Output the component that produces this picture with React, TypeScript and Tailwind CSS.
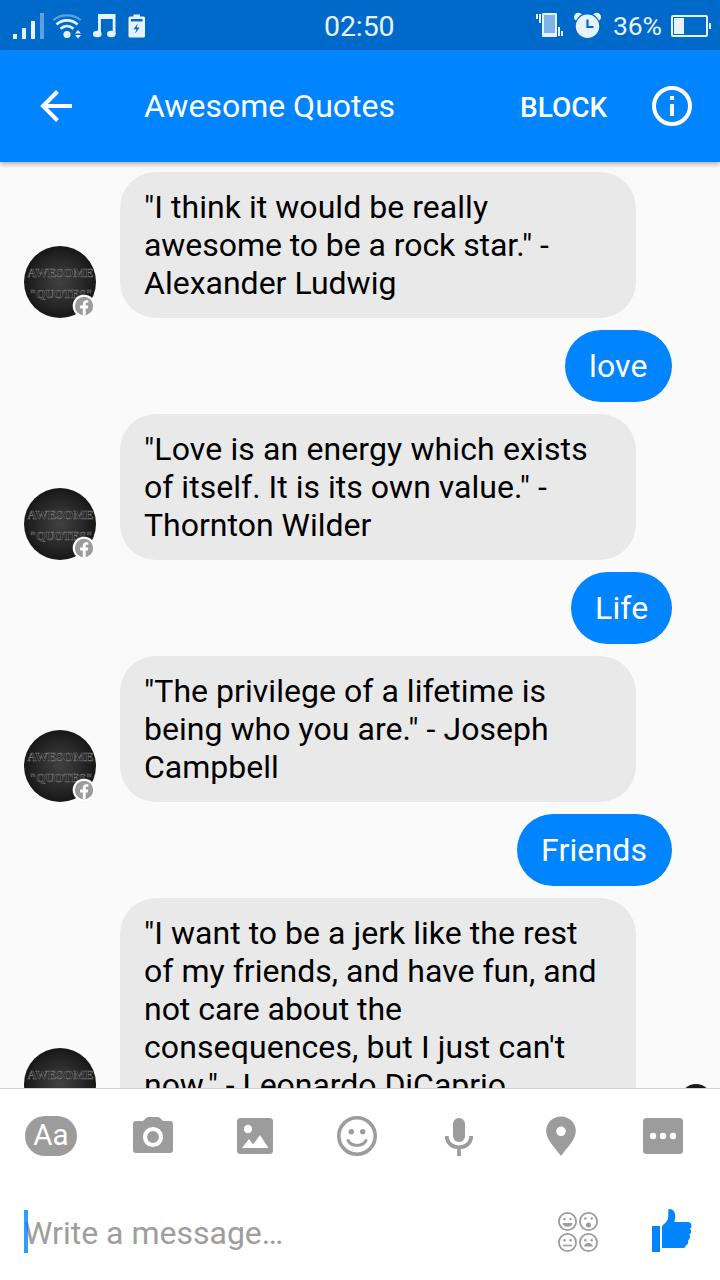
import React from "react";

type Message = { from: "bot" | "me"; lines: string[]; size?: string; tracking?: string[] };

const messages: Message[] = [
  {
    from: "bot",
    lines: ['"I think it would be really', 'awesome to be a rock star." -', "Alexander Ludwig"],
    tracking: ["tracking-[0.04px]", "tracking-[-0.06px]"],
  },
  { from: "me", lines: ["love"], size: "w-[107px]" },
  {
    from: "bot",
    lines: ['"Love is an energy which exists', 'of itself. It is its own value." -', "Thornton Wilder"],
    tracking: ["tracking-[0.12px]", "tracking-[0.02px]"],
  },
  { from: "me", lines: ["Life"], size: "w-[101px]" },
  {
    from: "bot",
    lines: ['"The privilege of a lifetime is', 'being who you are." - Joseph', "Campbell"],
    tracking: ["tracking-[0.04px]", "tracking-[0.04px]"],
  },
  { from: "me", lines: ["Friends"], size: "w-[155px]" },
  {
    from: "bot",
    lines: [
      '"I want to be a jerk like the rest',
      "of my friends, and have fun, and",
      "not care about the",
      "consequences, but I just can't",
      'now." - Leonardo DiCaprio',
    ],
    tracking: ["tracking-[0.03px]", "tracking-[0.03px]", "tracking-[-0.04px]", "tracking-[0.1px]", "tracking-[-0.04px]"],
  },
];

function StatusBar() {
  return (
    <div className="grid h-[50px] shrink-0 grid-cols-[1fr_auto_1fr] items-center bg-[#006acb] text-[#e6f3ff]">
      <svg className="h-[50px] w-[160px]" viewBox="0 0 160 50" fill="#e6f3ff">
        <rect x="13" y="33" width="4" height="5" />
        <rect x="22" y="27" width="4" height="11" />
        <rect x="31" y="20" width="4" height="18" />
        <rect x="40" y="12" width="4" height="26" opacity=".4" />
        <g fill="none" stroke="#e6f3ff" strokeWidth="2.7">
          <path d="M53.3 19.3C60.5 12.700 73.500 12.700 80.700 19.300" opacity=".4" strokeWidth="2.2" />
          <path d="M56.500 23.400C62.500 17.900 71.500 17.900 77.500 23.400" />
          <path d="M60.500 27.800C64.500 24.200 69.500 24.200 73.500 27.800" />
        </g>
        <circle cx="67" cy="33.500" r="3.600" />
        <path d="M78 29l3 3.500h-6zM78 37.500l3-3.500h-6z" />
        <path d="M98 13h17.500v20h-2.800V18h-11.800v15H98z" />
        <ellipse cx="97.300" cy="33" rx="4.300" ry="3.300" />
        <ellipse cx="111.300" cy="33" rx="4.300" ry="3.300" />
        <path fillRule="evenodd" d="M133.500 13.500h6.500v2h3.500q1.500 0 1.500 1.500v18q0 1.500-1.500 1.500h-13.500q-1.500 0-1.500-1.500V17q0-1.500 1.500-1.500h3.500zM131 18v2.600h11.500V18zM137.800 22.500l-4.300 5.700h3l-1.500 4.500 4.700-6.200h-3z" />
      </svg>
      <span className="w-[72px] pt-[2px] text-[28.500px] leading-[50px] tracking-[-0.1px]">02:50</span>
      <div className="flex items-center justify-end">
        <svg className="h-[50px] w-[76px]" viewBox="530 0 76 50" fill="#e6f3ff">
          <rect x="542" y="12" width="15" height="24" rx="1" />
          <rect x="544" y="14" width="11" height="18" fill="#7fb4e6" />
          <rect x="536" y="13" width="2" height="5" />
          <rect x="539" y="13" width="2" height="9" />
          <rect x="558" y="26" width="2" height="9" />
          <rect x="561" y="30" width="2" height="5" />
          <circle cx="578.300" cy="16" r="4.300" />
          <circle cx="596.700" cy="16" r="4.300" />
          <circle cx="587.500" cy="25" r="12.700" fill="#006acb" />
          <circle cx="587.500" cy="25.300" r="11.700" />
          <path d="M587.500 18.500v7.500h6" fill="none" stroke="#006acb" strokeWidth="2.200" />
        </svg>
        <span className="ml-[7px] w-[50px] text-[26.500px] leading-[48px] tracking-[-0.2px]">36%</span>
        <svg className="ml-[7px] h-[50px] w-[50px]" viewBox="670 0 50 50" fill="#e6f3ff">
          <rect x="672" y="15" width="35" height="20" rx="1" fill="none" stroke="#e6f3ff" strokeWidth="2" />
          <rect x="674" y="17" width="10" height="16" />
          <rect x="709" y="22" width="2" height="6" />
        </svg>
      </div>
    </div>
  );
}

function Header() {
  return (
    <header className="z-10 flex h-[112px] shrink-0 items-center bg-[#0084ff] text-white shadow-[0_2px_5px_rgba(0,0,0,0.32)]">
      <svg className="ml-[38px] h-[36px] w-[36px]" viewBox="38 88 36 36" fill="none" stroke="#fff" strokeWidth="4">
        <path d="M72 106H43M57.500 91.500L43 106l14.500 14.500" />
      </svg>
      <h1 className="ml-[70px] w-[376px] text-[32px] leading-[40px]">Awesome Quotes</h1>
      <span className="w-[132px] pt-[3px] text-[28px] font-medium leading-[40px]">BLOCK</span>
      <svg className="h-[40px] w-[40px]" viewBox="0 0 40 40">
        <circle cx="20" cy="20" r="18" fill="none" stroke="#fff" strokeWidth="4" />
        <path d="M18 10h4v4h-4zM18 18h4v12h-4z" fill="#fff" />
      </svg>
    </header>
  );
}

function Avatar() {
  return (
    <svg className="ml-6 mr-6 h-[72px] w-[72px] shrink-0" viewBox="0 0 72 72">
      <defs>
        <radialGradient id="disc">
          <stop offset="0" stopColor="#414141" />
          <stop offset="0.600" stopColor="#292929" />
          <stop offset="1" stopColor="#171717" />
        </radialGradient>
      </defs>
      <circle cx="36" cy="36" r="36" fill="url(#disc)" />
      <g fill="#222" stroke="#777" strokeWidth=".5" fontFamily="Liberation Serif, serif" fontSize="12" fontWeight="bold">
        <text x="3.500" y="31" textLength="66" lengthAdjust="spacingAndGlyphs">AWESOME</text>
        <text x="5.500" y="52" textLength="63" lengthAdjust="spacingAndGlyphs">"QUOTES"</text>
      </g>
      <circle cx="60" cy="60" r="11.300" fill="#fff" />
      <circle cx="60" cy="60" r="9.200" fill="#9c9c9c" />
      <path d="M58.800 69v-6.500h-2.700v-2.900h2.700v-1.700c0-2.300 1.400-3.700 3.500-3.700h2v2.600h-1.200c-1 0-1.400.5-1.400 1.300v1.500h2.600l-.4 2.900h-2.200V69z" fill="#fff" />
    </svg>
  );
}

function Bubble({ message }: { message: Message }) {
  if (message.from === "me") {
    return (
      <div className={`mr-12 flex h-[72px] shrink-0 items-center self-end rounded-[36px] bg-[#0084ff] pl-6 tracking-[0.15px] text-white ${message.size}`}>
        {message.lines[0]}
      </div>
    );
  }
  return (
    <div className="flex shrink-0 items-end">
      <Avatar />
      <div className="w-[516px] rounded-[36px] bg-[#e9e9e9] px-6 py-4 text-black">
        {message.lines.map((line, index) => (
          <div key={line} className={`whitespace-nowrap ${message.tracking?.[index] ?? ""}`}>{line}</div>
        ))}
      </div>
    </div>
  );
}

function Toolbar() {
  return (
    <div className="grid h-[94px] w-[714px] grid-cols-7 place-items-center text-[#9c9c9c]">
      <span className="flex h-[40px] w-[52px] items-center justify-center rounded-[20px] bg-[#9c9c9c] text-[29.500px] leading-[38px] text-white"><span className="pb-[3px]">Aa</span></span>
      <svg className="h-[40px] w-[42px]" viewBox="132 1116 42 40">
        <path d="M136 1121h7l3-3q1-1 2.500-1h9q1.500 0 2.500 1l3 3h7q3 0 3 3v26q0 3-3 3h-34q-3 0-3-3v-26q0-3 3-3z" fill="currentColor" />
        <circle cx="153" cy="1137" r="8" fill="none" stroke="#fff" strokeWidth="4.200" />
      </svg>
      <svg className="h-[40px] w-[40px]" viewBox="235 1116 40 40">
        <rect x="237" y="1118" width="36" height="36" rx="3.500" fill="currentColor" />
        <circle cx="248" cy="1129" r="4.200" fill="#fff" />
        <path d="M242 1148l7-9 4 5.500 7-9.500 8.500 13z" fill="#fff" />
      </svg>
      <svg className="h-[40px] w-[40px]" viewBox="0 0 40 40">
        <circle cx="20" cy="20" r="18.200" fill="none" stroke="currentColor" strokeWidth="3.600" />
        <circle cx="14.300" cy="15.700" r="2.700" fill="currentColor" />
        <circle cx="25.700" cy="15.700" r="2.700" fill="currentColor" />
        <path d="M11 24.500C14.500 31 25.500 31 29 24.500" fill="none" stroke="currentColor" strokeWidth="3" strokeLinecap="round" />
      </svg>
      <svg className="h-[40px] w-[40px]" viewBox="439 1116 40 40">
        <rect x="453" y="1118" width="12" height="24" rx="6" fill="currentColor" />
        <path d="M446.800 1136c0 15.200 24.400 15.200 24.400 0M459 1147v9" fill="none" stroke="currentColor" strokeWidth="3.800" />
      </svg>
      <svg className="h-[40px] w-[40px]" viewBox="541 1116 40 40">
        <path fillRule="evenodd" d="M561 1116.500c-8.500 0-14.800 6.500-14.800 14.500 0 8.500 7.500 15 14.800 25 7.300-10 14.800-16.500 14.800-25 0-8-6.300-14.500-14.800-14.500zM561 1126.500a4.800 4.800 0 1 1 0 9.600 4.800 4.800 0 0 1 0-9.600z" fill="currentColor" />
      </svg>
      <svg className="h-[40px] w-[42px]" viewBox="642 1116 42 40">
        <rect x="643" y="1118" width="40" height="36" rx="3.500" fill="currentColor" />
        <g fill="#fff">
          <circle cx="653" cy="1136" r="3.200" />
          <circle cx="663" cy="1136" r="3.200" />
          <circle cx="673" cy="1136" r="3.200" />
        </g>
      </svg>
    </div>
  );
}

function Composer() {
  return (
    <div className="flex h-[97px] items-center">
      <div className="relative ml-[24px] flex h-[44px] w-[533px] items-center">
        <span className="pt-[2px] text-[32px] leading-[38px] text-[#9e9e9e]">Write a message…</span>
        <span className="absolute left-0 top-0 h-[43px] w-[4px] bg-[#0084ff]/80" />
      </div>
      <svg className="h-[42px] w-[42px]" viewBox="557 1211 42 42" fill="none" stroke="#9c9c9c" strokeWidth="1.800">
        <circle cx="567.500" cy="1221.500" r="8.600" />
        <circle cx="588.500" cy="1221.500" r="8.600" />
        <circle cx="567.500" cy="1242.500" r="8.600" />
        <circle cx="588.500" cy="1242.500" r="8.600" />
        <path d="M563 1245.500h9" strokeWidth="1.600" />
        <g fill="#9c9c9c" stroke="none">
          <path d="M562.500 1223h10c-.3 5-9.700 5-10 0z" />
          <circle cx="588.500" cy="1225" r="2.500" />
          <path d="M584 1246.500c.3-4.800 8.700-4.800 9 0z" />
          <circle cx="564.500" cy="1219" r="1.200" />
          <circle cx="570.500" cy="1219" r="1.200" />
          <circle cx="585.300" cy="1218.500" r="1.200" />
          <circle cx="591.700" cy="1218.500" r="1.200" />
          <circle cx="564.500" cy="1240.300" r="1.200" />
          <circle cx="570.500" cy="1240.300" r="1.200" />
          <circle cx="585.300" cy="1240.300" r="1.200" />
          <circle cx="591.700" cy="1240.300" r="1.200" />
        </g>
      </svg>
      <svg className="ml-[51px] h-[46px] w-[44px]" viewBox="650 1209 44 46" fill="#0084ff">
        <path d="M652 1226h8v26h-8z" />
        <path d="M662 1226c4-3.500 6.300-6 6.300-9.500v-6.500q0-1 1-1c4 0 6 3.500 6 7.500 0 2.500-.8 4-.8 5.500h13.500c4 0 4.500 5.500 2 6.700 1.800 1.500 1.500 5-.8 6 1.500 1.500 1 4.500-1.200 5.700 1 2.800-1 4.800-2.500 5.100.5 1.500-.7 2.500-2.500 2.500H662z" />
      </svg>
    </div>
  );
}

export default function App() {
  return (
    <div className="flex h-[1280px] w-[720px] flex-col overflow-hidden bg-[#fafafa] font-['Roboto',sans-serif]">
      <StatusBar />
      <Header />
      <main className="relative min-h-0 flex-1 overflow-hidden">
        <div className="flex flex-col gap-3 pt-[10px] text-[32px] leading-[38px]">
          {messages.map((message, index) => (
            <Bubble key={index} message={message} />
          ))}
        </div>
        <span className="absolute left-[680px] top-[922px] h-8 w-8 rounded-full bg-[#1c1c1c]" />
      </main>
      <footer className="h-[192px] shrink-0 border-t border-[#d2d2d2] bg-white">
        <Toolbar />
        <Composer />
      </footer>
    </div>
  );
}
